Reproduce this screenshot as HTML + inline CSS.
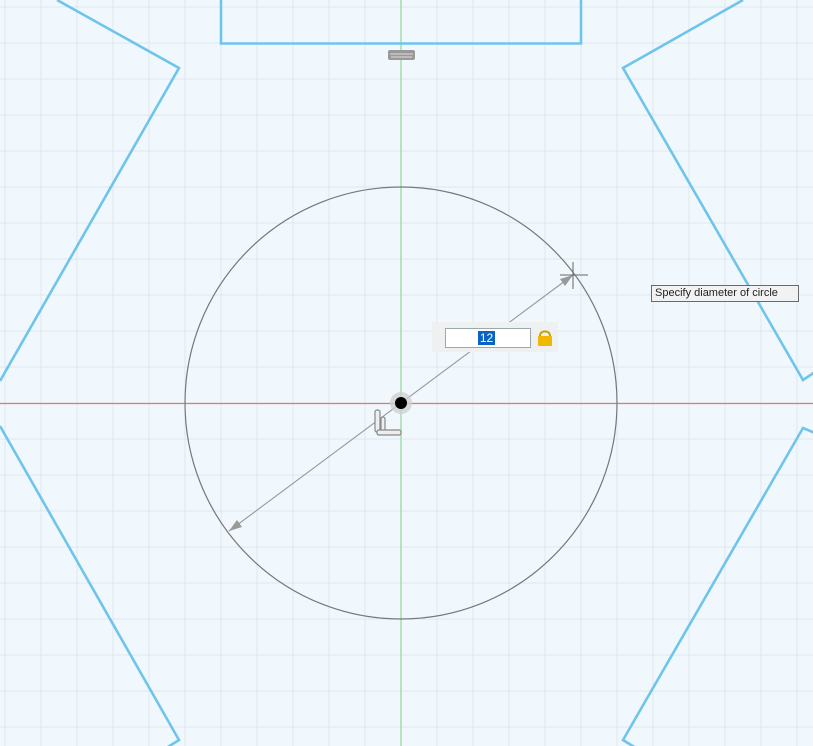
<!DOCTYPE html>
<html><head><meta charset="utf-8"><style>
html,body{margin:0;padding:0;width:813px;height:746px;overflow:hidden;background:#f0f8fd;}
svg{position:absolute;left:0;top:0}
.tip{position:absolute;left:651px;top:285px;border:1px solid #6a6a6a;background:#f2f2f2;font:11px "Liberation Sans",sans-serif;color:#222;line-height:15px;padding-left:3px;box-sizing:border-box;width:148px;height:17px;white-space:nowrap}
.back{position:absolute;left:432px;top:322px;width:126px;height:30px;background:#eef0f2}
.inp{position:absolute;left:445px;top:328px;width:86px;height:20px;border:1px solid #9aa;background:#fff;box-sizing:border-box}
.sel{position:absolute;left:478px;top:331px;width:17px;height:14px;background:#0a63c9;color:#fff;font:12px "Liberation Sans",sans-serif;line-height:14px;text-align:center}
.lk{position:absolute;left:537px;top:330px}
</style></head><body>
<svg width="813" height="746">
<defs><pattern id="g" x="4.5" y="6.5" width="36" height="36" patternUnits="userSpaceOnUse">
<path d="M0 0.5H36M0.5 0V36" stroke="#e0e8ed" stroke-width="1" fill="none"/></pattern></defs>
<rect width="813" height="746" fill="url(#g)"/>
<line x1="0" y1="403.5" x2="813" y2="403.5" stroke="#e07878" stroke-width="1.2"/>
<line x1="401" y1="0" x2="401" y2="746" stroke="#9fdca4" stroke-width="1.4"/>
<g stroke="#6fc4ec" stroke-width="2.6" fill="none">
<path d="M221 0V43.5H581V0"/>
<path d="M57 0L179 68L0 381"/>
<path d="M0 426L179 740L163 750"/>
<path d="M743 0L623 68L803 380L815 372"/>
<path d="M815 433L803 428L623 740L636 748"/>
</g>
<circle cx="401" cy="403" r="216" fill="none" stroke="#777" stroke-width="1.2"/>
<line x1="229" y1="531" x2="573" y2="275" stroke="#999" stroke-width="1.1"/>
<path d="M573 275L560 279L565 286Z" fill="#999"/>
<path d="M229 531L242 527L237 520Z" fill="#999"/>
<path d="M560 275H588M573 262V289" stroke="#666" stroke-width="1"/>
<circle cx="401" cy="403" r="11" fill="#cfcfcf" opacity="0.8"/>
<circle cx="401" cy="403" r="6" fill="#000"/>
<g stroke="#888" fill="#eee" stroke-width="1.2">
<rect x="375" y="410" width="5" height="22" rx="2"/>
<rect x="381" y="417" width="4" height="16" rx="2"/>
<rect x="377" y="430" width="24" height="5" rx="2"/>
</g>
<rect x="388" y="50" width="27" height="10" rx="2" fill="#999"/>
<path d="M390 54H413M391 57H412" stroke="#ddd" stroke-width="1"/>
</svg>
<div class="back"></div>
<div class="inp"></div>
<div class="sel">12</div>
<svg class="lk" width="16" height="17"><rect x="3" y="1.5" width="10" height="10" rx="4" fill="none" stroke="#c9a000" stroke-width="2"/><rect x="1" y="6" width="14" height="10" rx="1" fill="#f0b800"/></svg>
<div class="tip">Specify diameter of circle</div>
</body></html>
